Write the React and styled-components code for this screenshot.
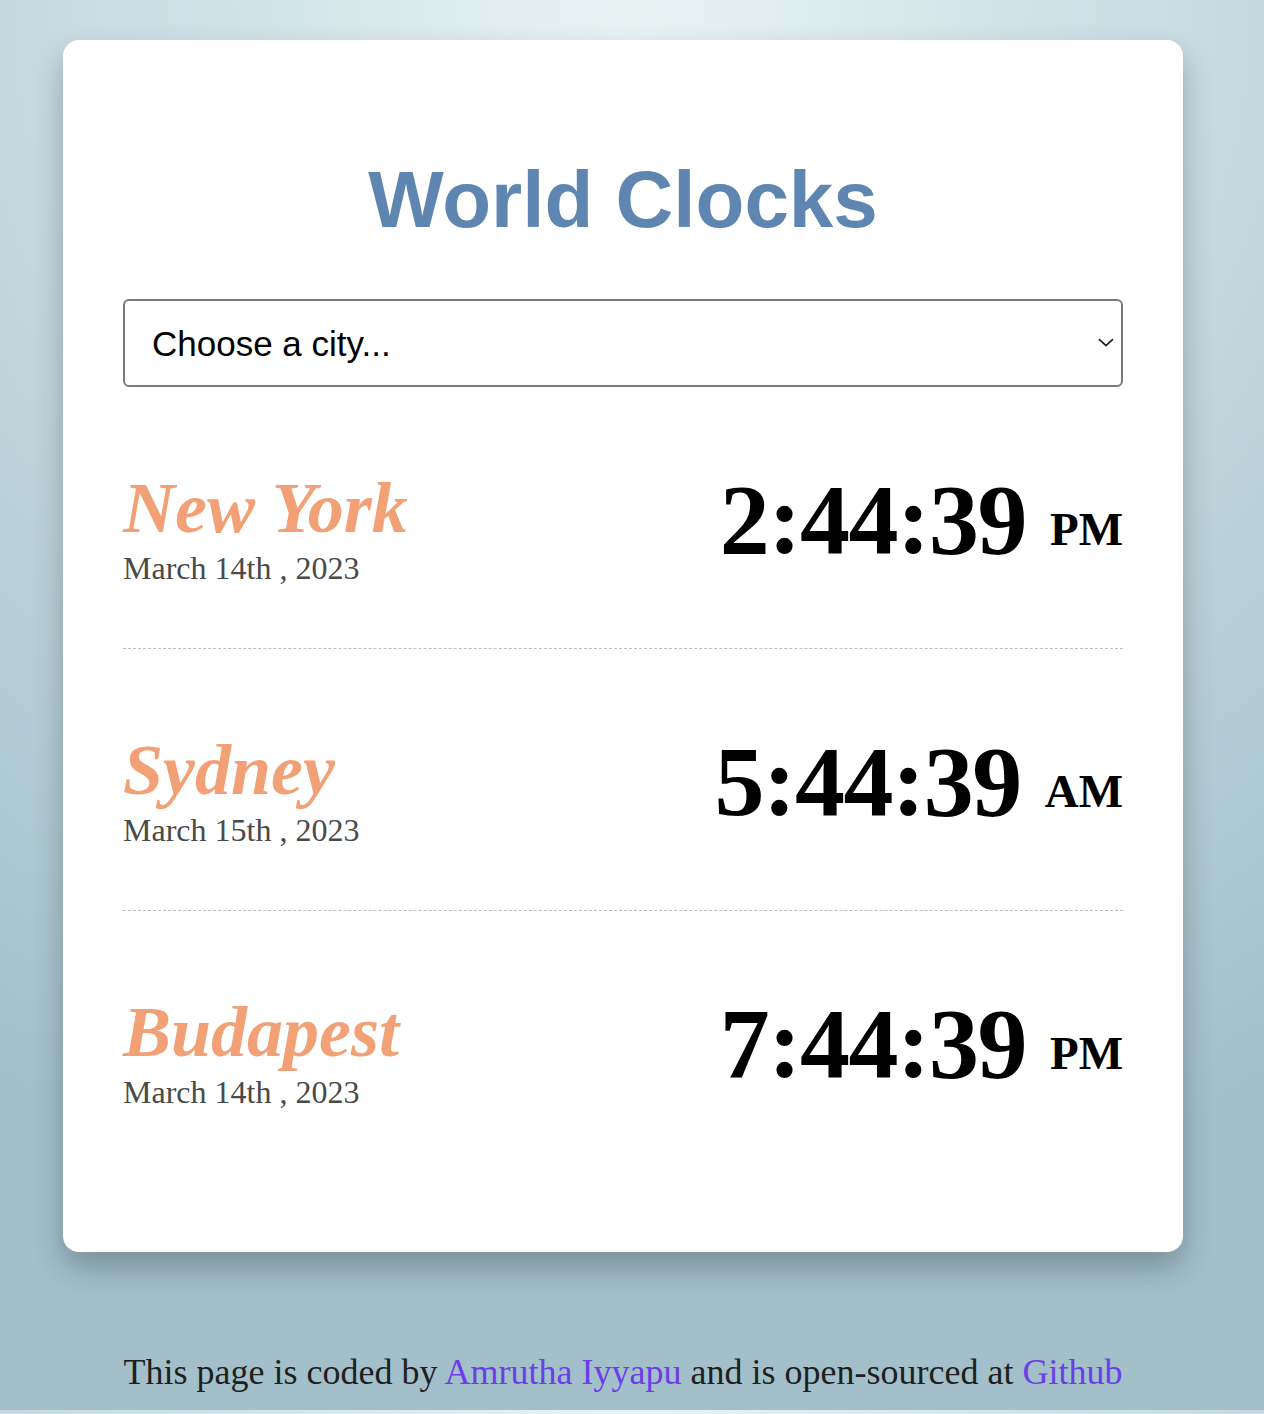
import React from "react";
import styled, { createGlobalStyle } from "styled-components";

const GlobalStyle = createGlobalStyle`
  body {
    margin: 8px;
    font-family: "Liberation Serif", "Times New Roman", serif;
    background: radial-gradient(circle at 50% 0, #e8f4f4 0px, #c5dae0 600px, #a2bfca 1250px);
  }
`;

const Page = styled.div`
  width: 1230px;
`;

const Card = styled.div`
  width: 1120px;
  box-sizing: border-box;
  margin: 32px auto 0;
  padding: 60px 60px 80px;
  background-color: white;
  border-radius: 16px;
  box-shadow: 0 15px 30px rgba(0, 0, 0, 0.25);
`;

const Title = styled.h1`
  margin: 0.67em 0;
  font-family: "Liberation Sans", Arial, sans-serif;
  font-size: 80px;
  font-weight: 700;
  text-align: center;
  color: #5f86b1;
`;

const SelectWrap = styled.div`
  position: relative;
`;

const CitySelect = styled.select`
  display: block;
  width: 100%;
  height: 88px;
  box-sizing: border-box;
  padding: 0 40px 0 27px;
  font-family: "Liberation Sans", Arial, sans-serif;
  font-size: 35px;
  color: black;
  background: white;
  border: 2px solid #7a7a7a;
  border-radius: 6px;
  appearance: none;
  outline: none;
`;

const Chevron = styled.svg`
  position: absolute;
  right: 9px;
  top: 39px;
  pointer-events: none;
`;

const CityRow = styled.div`
  display: flex;
  justify-content: space-between;
  align-items: flex-start;
  padding: 80px 0 61px;
  border-bottom: 1px dashed #bdbdbd;
  &:last-child {
    border-bottom: none;
  }
`;

const CityName = styled.h2`
  margin: 0;
  font-size: 72px;
  font-style: italic;
  font-weight: 700;
  color: #f2a177;
`;

const CityDate = styled.div`
  font-size: 32px;
  color: #4a4a4a;
`;

const Time = styled.div`
  margin-top: 3px;
  font-size: 100px;
  font-weight: 700;
  line-height: 1;
  color: black;
  white-space: nowrap;
`;

const Digits = styled.span`
  letter-spacing: -1.5px;
`;

const Meridiem = styled.span`
  margin-left: 24px;
  font-size: 47px;
  letter-spacing: 0;
  vertical-align: 8px;
`;

const Footer = styled.p`
  margin: 99px 0 9px;
  font-size: 36px;
  text-align: center;
  color: #1f1f1f;
`;

const Link = styled.a`
  color: #6b3ee8;
  text-decoration: none;
`;

const cities = [
  { name: "New York", date: "March 14th , 2023", time: "2:44:39", meridiem: "PM" },
  { name: "Sydney", date: "March 15th , 2023", time: "5:44:39", meridiem: "AM" },
  { name: "Budapest", date: "March 14th , 2023", time: "7:44:39", meridiem: "PM" },
];

export default function App() {
  return (
    <>
      <GlobalStyle />
      <Page>
        <Card>
          <Title>World Clocks</Title>
          <SelectWrap>
            <CitySelect defaultValue="">
              <option value="">Choose a city...</option>
              <option value="current">My current location</option>
              <option value="Europe/Paris">Paris</option>
              <option value="Asia/Tokyo">Tokyo</option>
            </CitySelect>
            <Chevron width="16" height="9" viewBox="0 0 16 9">
              <path d="M1 1.2 L8 7.6 L15 1.2" fill="none" stroke="#1a1a1a" strokeWidth="1.6" />
            </Chevron>
          </SelectWrap>
          {cities.map((city) => (
            <CityRow key={city.name}>
              <div>
                <CityName>{city.name}</CityName>
                <CityDate>{city.date}</CityDate>
              </div>
              <Time>
                <Digits>{city.time}</Digits>
                <Meridiem>{city.meridiem}</Meridiem>
              </Time>
            </CityRow>
          ))}
        </Card>
        <Footer>
          This page is coded by <Link href="#">Amrutha Iyyapu</Link> and is
          open-sourced at <Link href="#">Github</Link>
        </Footer>
      </Page>
    </>
  );
}
